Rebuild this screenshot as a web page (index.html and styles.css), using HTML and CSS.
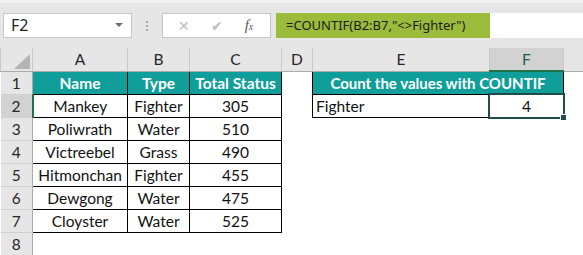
FILE: index.html
```html
<!DOCTYPE html>
<html lang="en">
<head>
	<meta charset="UTF-8">
	<title>COUNTIF</title>
	<link rel="stylesheet" href="styles.css">
</head>
<body>
	<header class="bar">
		<div class="namebox">
			<span>F2</span>
			<i class="drop"></i>
		</div>
		<div class="dots"><b></b><b></b><b></b></div>
		<div class="btns">
			<span class="x">&#x2715;</span>
			<span class="ok">&#x2714;</span>
			<span class="fx">f<small>x</small></span>
		</div>
		<div class="formula">
			<span class="hl">=COUNTIF(B2:B7,"&lt;&gt;Fighter")</span>
		</div>
	</header>

	<table class="sheet">
		<colgroup>
			<col style="width:32px">
			<col style="width:95px">
			<col style="width:62px">
			<col style="width:92px">
			<col style="width:31px">
			<col style="width:177px">
			<col style="width:74px">
			<col>
		</colgroup>
		<tr class="cols">
			<th class="corner"><i></i></th>
			<th>A</th><th>B</th><th>C</th><th>D</th><th>E</th><th class="sel">F</th><th></th>
		</tr>
		<tr>
			<th class="rh">1</th>
			<td class="hd">Name</td><td class="hd">Type</td><td class="hd rb">Total Status</td>
			<td></td>
			<td class="hd wide" colspan="2">Count the values with COUNTIF</td>
			<td></td>
		</tr>
		<tr>
			<th class="rh sel">2</th>
			<td class="c">Mankey</td><td class="c">Fighter</td><td class="c rb">305</td>
			<td></td>
			<td class="l">Fighter</td><td class="c rb active">4<i class="handle"></i></td>
			<td></td>
		</tr>
		<tr>
			<th class="rh">3</th>
			<td class="c">Poliwrath</td><td class="c">Water</td><td class="c rb">510</td>
			<td></td><td></td><td></td><td></td>
		</tr>
		<tr>
			<th class="rh">4</th>
			<td class="c">Victreebel</td><td class="c">Grass</td><td class="c rb">490</td>
			<td></td><td></td><td></td><td></td>
		</tr>
		<tr>
			<th class="rh">5</th>
			<td class="c">Hitmonchan</td><td class="c">Fighter</td><td class="c rb">455</td>
			<td></td><td></td><td></td><td></td>
		</tr>
		<tr>
			<th class="rh">6</th>
			<td class="c">Dewgong</td><td class="c">Water</td><td class="c rb">475</td>
			<td></td><td></td><td></td><td></td>
		</tr>
		<tr>
			<th class="rh">7</th>
			<td class="c">Cloyster</td><td class="c">Water</td><td class="c rb">525</td>
			<td></td><td></td><td></td><td></td>
		</tr>
		<tr>
			<th class="rh">8</th>
			<td></td><td></td><td></td><td></td><td></td><td></td><td></td>
		</tr>
	</table>
</body>
</html>
```

FILE: styles.css
```css
html, body, header, div, table, tr, th, td {
	margin: 0;
	padding: 0;
}
body {
	background: #fff;
	width: 583px;
	height: 255px;
	overflow: hidden;
	font-family: "Lato", "Liberation Sans", sans-serif;
}

/* formula bar */
.bar {
	display: flex;
	align-items: center;
	height: 48px;
	padding-left: 3px;
	background: #e6e6e6;
	border-top: 3px solid #f1f1f1;
	box-sizing: border-box;
	font-family: "Noto Sans", "Open Sans", sans-serif;
}
.namebox, .btns, .formula {
	display: flex;
	align-items: center;
	height: 25px;
	background: #fff;
	border: 1px solid #c6c6c6;
	box-sizing: border-box;
	margin-top: -1px;
}
.namebox {
	width: 129px;
	padding-left: 7px;
	font-size: 16px;
	color: #222;
}
.namebox span {
	flex: 1;
}
.drop {
	width: 0;
	height: 0;
	margin-right: 8px;
	border-left: 4px solid transparent;
	border-right: 4px solid transparent;
	border-top: 4px solid #6e6e6e;
}
.dots {
	display: flex;
	flex-direction: column;
	gap: 2px;
	width: 30px;
	align-items: center;
}
.dots b {
	width: 2px;
	height: 2px;
	background: #a8a8a8;
}
.btns {
	width: 109px;
	justify-content: space-around;
	padding: 0 6px 0 4px;
	color: #bdbdbd;
	font-size: 14px;
}
.btns .fx {
	color: #5a5a5a;
	font-family: "Liberation Serif", serif;
	font-style: italic;
	font-size: 15px;
}
.btns .fx small {
	font-size: 10px;
}
.formula {
	flex: 1;
	margin-left: 5px;
	border: 0;
	overflow: hidden;
}
.hl {
	display: flex;
	align-items: center;
	flex: none;
	width: 214px;
	height: 25px;
	padding-left: 10px;
	box-sizing: border-box;
	background: #9bbb3b;
	color: #1b1b1b;
	font-size: 13px;
	white-space: nowrap;
}

/* grid */
.sheet {
	table-layout: fixed;
	border-collapse: collapse;
	width: 583px;
	font-size: 15.5px;
	color: #111;
}
.sheet tr {
	height: 23px;
}
.sheet th, .sheet td {
	padding: 0;
	box-sizing: border-box;
	white-space: nowrap;
	overflow: hidden;
}
.cols th {
	height: 22px;
	background: #e6e6e6;
	border-left: 1px solid #c8c8c8;
	border-bottom: 1px solid #ababab;
	font-weight: normal;
	font-size: 15.5px;
	color: #262626;
}
.cols th.sel {
	background: #d2d2d2;
	border-bottom: 2px solid #217346;
	color: #1f5c38;
}
.corner {
	position: relative;
}
.corner i {
	position: absolute;
	right: 2px;
	bottom: 2px;
	border-left: 16px solid transparent;
	border-bottom: 15px solid #b4b4b4;
}
.rh {
	background: #e6e6e6;
	border-right: 1px solid #ababab;
	border-bottom: 1px solid #d0d0d0;
	font-weight: normal;
	font-size: 15.5px;
	color: #262626;
}
.rh.sel {
	background: #d2d2d2;
	border-right: 2px solid #217346;
}
.hd {
	background: #0f9e99;
	color: #fff;
	font-weight: bold;
	text-align: center;
	border: 1px solid #000;
}
.hd.wide {
	font-size: 15px;
}
.c {
	text-align: center;
	border: 1px solid #000;
}
.l {
	padding-left: 3px !important;
	border: 1px solid #000;
}
.active {
	position: relative;
	overflow: visible !important;
}
.active:after {
	content: '';
	position: absolute;
	left: -2px;
	top: -2px;
	right: -2px;
	bottom: -2px;
	border: 2px solid #1f4e4a;
}
.handle {
	position: absolute;
	right: -4px;
	bottom: -4px;
	width: 5px;
	height: 5px;
	background: #1f4e4a;
	border: 1px solid #fff;
	z-index: 1;
}
```
